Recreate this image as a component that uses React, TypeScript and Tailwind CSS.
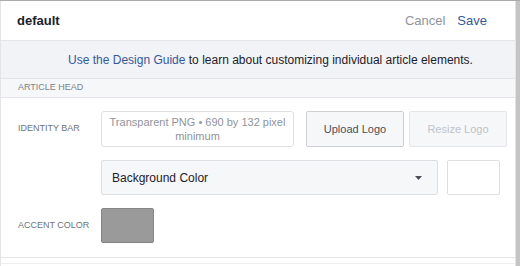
import React from "react";

const App: React.FC = () => {
  return (
    <div className="w-[520px] h-[266px] overflow-hidden bg-white flex flex-col font-['Liberation_Sans',Arial,sans-serif] border-t border-[#ababab]">
      <div className="flex flex-1">
        <div className="w-[516px] border-l border-r border-[#e3e4e6] flex flex-col">
          {/* header */}
          <div className="h-[40px] flex items-center justify-between pl-[16px] pr-[28px] border-b border-[#e3e5e9]">
            <span className="text-[13px] font-bold text-[#1d2129]">default</span>
            <div className="flex items-center gap-[12px] text-[13px]">
              <span className="text-[#90949c]">Cancel</span>
              <span className="text-[#365899]">Save</span>
            </div>
          </div>

          {/* design guide banner */}
          <div className="h-[38px] flex items-center justify-center pl-[25px] bg-[#f1f3f7] border-b border-[#e1e3e7] text-[12px] text-[#1d2129]">
            <span>
              <span className="text-[#365899]">Use the Design Guide</span> to learn about customizing individual article elements.
            </span>
          </div>

          {/* section header */}
          <div className="h-[19px] flex items-center pl-[17px] bg-[#f6f7f9] border-b border-[#e5e6e9] text-[9px] text-[#7d8187] uppercase">
            Article Head
          </div>

          {/* body */}
          <div className="flex flex-col gap-[13px] pt-[13px] pb-[14px] border-b border-[#e3e4e6]">
            <div className="flex items-center">
              <span className="w-[83px] pl-[17px] box-content text-[9px] text-[#6f7379] uppercase whitespace-nowrap">
                Identity Bar
              </span>
              <div className="w-[193px] h-[36px] flex items-center justify-center px-[3px] border border-[#dddfe2] rounded-[3px] text-[11px] leading-[14px] text-[#90949c] text-center">
                Transparent PNG • 690 by 132 pixel minimum
              </div>
              <button className="ml-[12px] w-[98px] h-[36px] bg-[#f6f7f9] border border-[#ced0d4] rounded-[2px] text-[11px] text-[#4b4f56]">
                Upload Logo
              </button>
              <button className="ml-[5px] w-[98px] h-[36px] bg-[#f6f7f9] border border-[#e4e6ea] rounded-[2px] text-[11px] text-[#bec3c9]">
                Resize Logo
              </button>
            </div>

            <div className="flex items-center pl-[100px]">
              <div className="w-[337px] h-[35px] flex items-center justify-between pl-[10px] pr-[15px] bg-[#f6f7f9] border border-[#dddfe2] rounded-[2px] text-[12px] text-[#1d2129]">
                <span>Background Color</span>
                <svg width="7" height="4" viewBox="0 0 7 4">
                  <path d="M0 0 H7 L3.5 4 Z" fill="#4b4f56" />
                </svg>
              </div>
              <div className="ml-[9px] w-[53px] h-[35px] bg-white border border-[#dddfe2] rounded-[2px]" />
            </div>

            <div className="flex items-center">
              <span className="w-[83px] pl-[17px] box-content text-[9px] text-[#6f7379] uppercase whitespace-nowrap">
                Accent Color
              </span>
              <div className="w-[53px] h-[35px] bg-[#9a9a9a] border border-[#858585] rounded-[2px]" />
            </div>
          </div>
          <div className="h-[6px] border-b border-[#eeeff1]" />
        </div>
        <div className="flex-1 bg-[#c4c4c4]" />
      </div>
    </div>
  );
};

export default App;
